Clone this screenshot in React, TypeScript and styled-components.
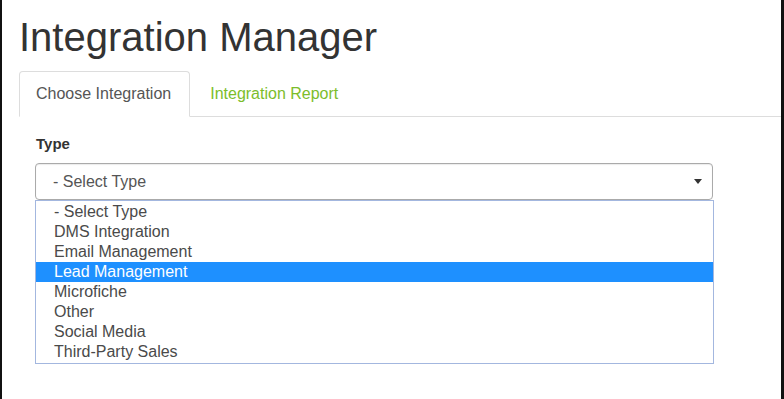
import React from 'react';
import styled, { createGlobalStyle } from 'styled-components';

const GlobalStyle = createGlobalStyle`
  html, body {
    margin: 0;
    padding: 0;
    background: #111;
  }
  body {
    font-family: "Liberation Sans", Arial, sans-serif;
    color: #333;
  }
`;

const Frame = styled.div`
  box-sizing: border-box;
  width: 784px;
  height: 399px;
  background: #fff;
  border-left: 2px solid #111;
  border-right: 3px solid #111;
  padding: 15px 0 0 17px;
  overflow: hidden;
`;

const Title = styled.h1`
  margin: 0 0 12px 0;
  font-size: 40px;
  line-height: 44px;
  font-weight: 400;
  color: #333;
`;

const TabList = styled.div`
  display: flex;
  gap: 3px;
  height: 45px;
  border-bottom: 1px solid #ddd;
`;

const Tab = styled.div<{ $active?: boolean }>`
  box-sizing: border-box;
  height: 46px;
  margin-bottom: -1px;
  padding: 11px 18px 0 16px;
  font-size: 16px;
  line-height: 22px;
  border: 1px solid ${p => (p.$active ? '#ddd' : 'transparent')};
  border-bottom-color: transparent;
  border-radius: 4px 4px 0 0;
  background: ${p => (p.$active ? '#fff' : 'transparent')};
  color: ${p => (p.$active ? '#555' : '#7cbd2b')};
  cursor: pointer;
`;

const Form = styled.div`
  width: 679px;
  padding: 17px 0 0 16px;
`;

const Label = styled.div`
  font-size: 15px;
  line-height: 20px;
  font-weight: 700;
  color: #333;
  margin-bottom: 9px;
  padding-left: 1px;
`;

const SelectBox = styled.div`
  box-sizing: border-box;
  display: flex;
  align-items: center;
  justify-content: space-between;
  width: 678px;
  height: 37px;
  padding: 0 10px 0 17px;
  border: 1px solid #aaa;
  border-radius: 4px;
  box-shadow: inset 0 1px 1px rgba(0, 0, 0, 0.08);
  font-size: 16px;
  color: #555;
`;

const Caret = styled.span`
  width: 0;
  height: 0;
  border-left: 4px solid transparent;
  border-right: 4px solid transparent;
  border-top: 5px solid #333;
`;

const OptionList = styled.ul`
  box-sizing: border-box;
  list-style: none;
  margin: 0;
  padding: 1px 0;
  width: 679px;
  border: 1px solid #a3b7df;
`;

const Option = styled.li<{ $selected?: boolean }>`
  height: 20px;
  line-height: 20px;
  padding-left: 18px;
  font-size: 16px;
  color: ${p => (p.$selected ? '#fff' : '#4a4a4a')};
  background: ${p => (p.$selected ? '#1e90ff' : '#fff')};
`;

const options = [
  '- Select Type',
  'DMS Integration',
  'Email Management',
  'Lead Management',
  'Microfiche',
  'Other',
  'Social Media',
  'Third-Party Sales',
];

const App: React.FC = () => {
  const selected = 'Lead Management';
  return (
    <>
      <GlobalStyle />
      <Frame>
        <Title>Integration Manager</Title>
        <TabList>
          <Tab $active>Choose Integration</Tab>
          <Tab>Integration Report</Tab>
        </TabList>
        <Form>
          <Label>Type</Label>
          <SelectBox>
            <span>- Select Type</span>
            <Caret />
          </SelectBox>
          <OptionList>
            {options.map(o => (
              <Option key={o} $selected={o === selected}>
                {o}
              </Option>
            ))}
          </OptionList>
        </Form>
      </Frame>
    </>
  );
};

export default App;
